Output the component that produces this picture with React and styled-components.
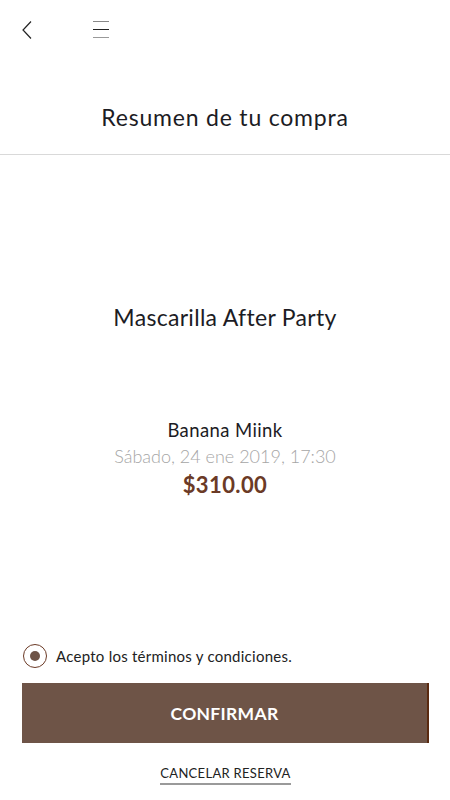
import React, { useState } from "react";
import styled, { createGlobalStyle } from "styled-components";

const Global = createGlobalStyle`
  html, body { margin: 0; padding: 0; background: #fff; }
  body { font-family: Lato, "Open Sans", sans-serif; color: #222; }
  * { box-sizing: border-box; }
`;

const Screen = styled.div`
  width: 450px;
  height: 800px;
  display: flex;
  flex-direction: column;
`;

const TopBar = styled.div`
  height: 60px;
  display: flex;
  align-items: center;
  gap: 56px;
  padding: 0 0 0 18px;
`;

const IconButton = styled.button`
  background: transparent;
  border: none;
  padding: 0;
  width: 18px;
  height: 20px;
  display: flex;
  align-items: center;
  justify-content: center;
  cursor: pointer;
`;

const Header = styled.div`
  height: 95px;
  display: flex;
  align-items: center;
  justify-content: center;
  border-bottom: 1px solid #d9d9d9;
  padding-top: 20px;
`;

const Title = styled.h1`
  margin: 0;
  font-size: 23px;
  font-weight: 400;
  letter-spacing: 0.8px;
  color: #1c1c24;
`;

const Body = styled.div`
  flex: 1;
  display: flex;
  flex-direction: column;
  align-items: center;
`;

const Product = styled.h2`
  margin: 148px 0 0;
  font-size: 23px;
  font-weight: 400;
  letter-spacing: 0.3px;
  color: #1c1c24;
`;

const Details = styled.div`
  margin-top: 86px;
  display: flex;
  flex-direction: column;
  align-items: center;
`;

const Place = styled.div`
  font-size: 18.5px;
  line-height: 26px;
  letter-spacing: 0.4px;
  color: #1c1c24;
`;

const DateText = styled.div`
  font-size: 18px;
  line-height: 26px;
  font-weight: 300;
  color: #a6a6a6;
`;

const Price = styled.div`
  font-size: 22px;
  line-height: 32px;
  font-weight: 700;
  color: #6b3a26;
  letter-spacing: 0.4px;
`;

const Footer = styled.div`
  padding: 0 21px 15px 22px;
  display: flex;
  flex-direction: column;
`;

const Terms = styled.label`
  display: flex;
  align-items: center;
  gap: 9px;
  margin-left: 1px;
  font-size: 15px;
  letter-spacing: 0.25px;
  color: #222;
  cursor: pointer;
`;

const Radio = styled.span`
  width: 24px;
  height: 24px;
  border-radius: 50%;
  border: 1.5px solid #6b3a26;
  display: flex;
  align-items: center;
  justify-content: center;

  &::after {
    content: "";
    width: 10px;
    height: 10px;
    border-radius: 50%;
    background: ${({ $checked }) => ($checked ? "#6e5447" : "transparent")};
  }
`;

const Confirm = styled.button`
  margin-top: 15px;
  height: 60px;
  width: 100%;
  border: none;
  border-right: 2px solid #5a2a10;
  background: #6e5447;
  color: #fff;
  font-family: inherit;
  font-size: 17.5px;
  font-weight: 700;
  letter-spacing: 0.3px;
  cursor: pointer;
`;

const Cancel = styled.button`
  align-self: center;
  margin-top: 22px;
  background: transparent;
  border: none;
  border-bottom: 2px solid #9a9a9a;
  padding: 0 0 2px;
  font-family: inherit;
  font-size: 13px;
  letter-spacing: 0.3px;
  color: #222;
  cursor: pointer;
`;

const App = () => {
  const [accepted, setAccepted] = useState(true);
  return (
    <Screen>
      <Global />
      <TopBar>
        <IconButton aria-label="back">
          <svg width="12" height="20" viewBox="0 0 12 20">
            <path d="M10 1.5 L2 10 L10 18.5" fill="none" stroke="#222" strokeWidth="1.2" />
          </svg>
        </IconButton>
        <IconButton aria-label="menu">
          <svg width="16" height="18" viewBox="0 0 16 18">
            <line x1="0" y1="0.5" x2="16" y2="0.5" stroke="#888" strokeWidth="1" />
            <line x1="0" y1="8.5" x2="16" y2="8.5" stroke="#222" strokeWidth="1" />
            <line x1="0" y1="16.5" x2="16" y2="16.5" stroke="#999" strokeWidth="1" />
          </svg>
        </IconButton>
      </TopBar>
      <Header>
        <Title>Resumen de tu compra</Title>
      </Header>
      <Body>
        <Product>Mascarilla After Party</Product>
        <Details>
          <Place>Banana Miink</Place>
          <DateText>Sábado, 24 ene 2019, 17:30</DateText>
          <Price>$310.00</Price>
        </Details>
      </Body>
      <Footer>
        <Terms onClick={() => setAccepted(!accepted)}>
          <Radio $checked={accepted} />
          Acepto los términos y condiciones.
        </Terms>
        <Confirm>CONFIRMAR</Confirm>
        <Cancel>CANCELAR RESERVA</Cancel>
      </Footer>
    </Screen>
  );
};

export default App;
